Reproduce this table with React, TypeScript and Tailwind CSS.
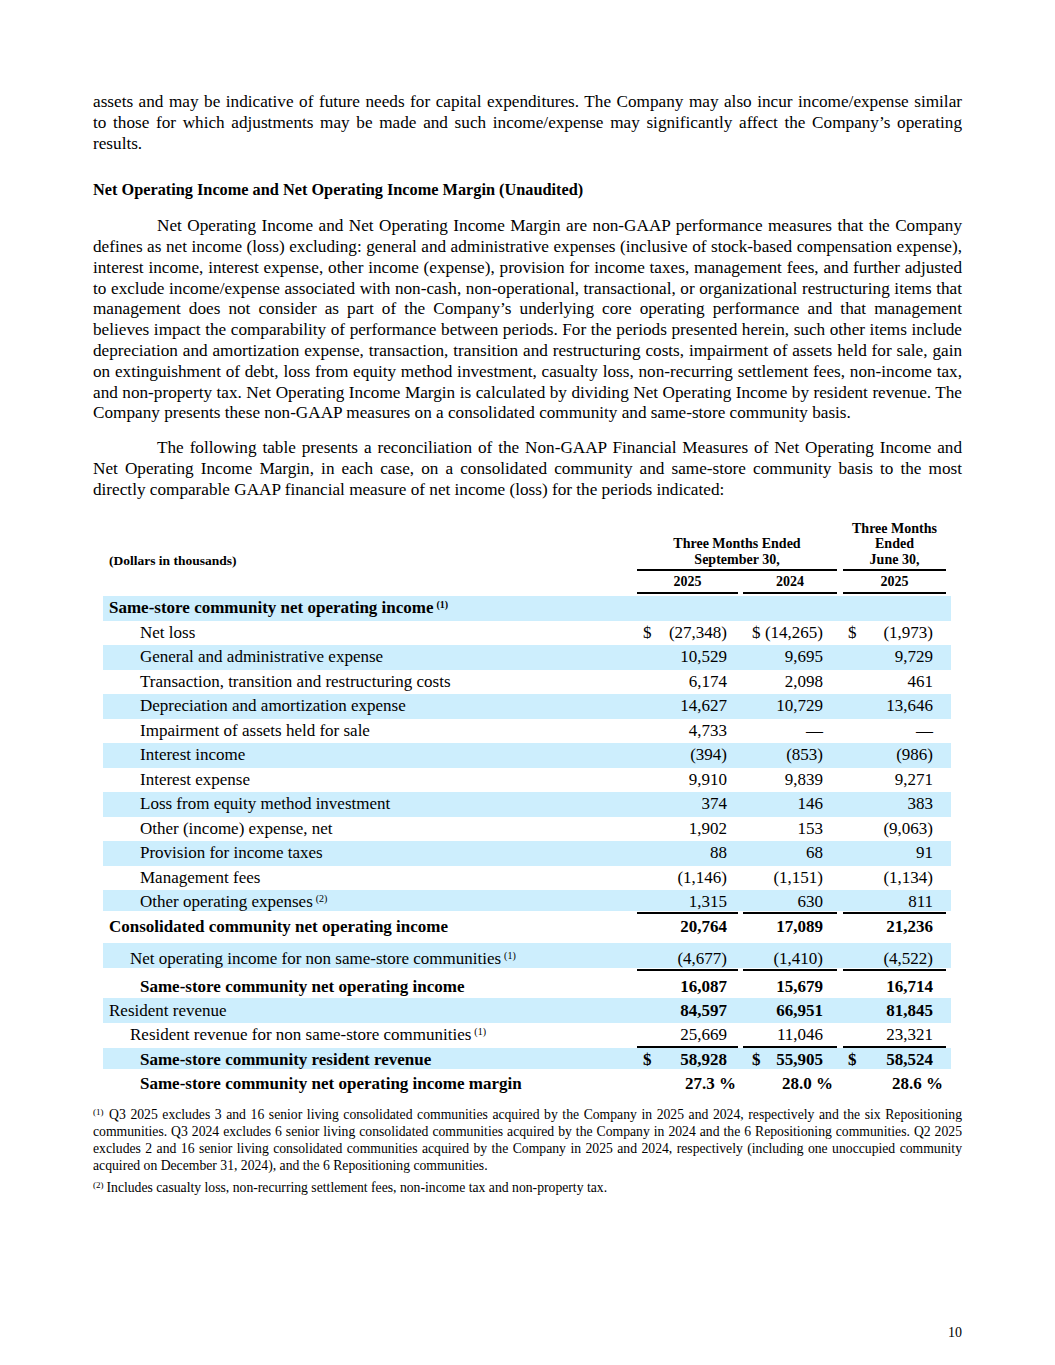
import type { ReactNode } from "react";
import clsx from "clsx";

// Non-GAAP reconciliation page (page 10)

type Cell = { v: string; dollar?: boolean };

interface RowDef {
  label: string;
  note?: string;
  indent: "none" | "sub" | "item";
  bold?: boolean;
  boldValues?: boolean;
  pct?: boolean;
  blue?: boolean;
  h: string;
  pad?: string;
  values?: Cell[];
}

const GRID = "grid grid-cols-[534px_101px_5px_94px_6px_103px_5px]";
const PL = ["pl-[6px]", "pl-[9px]", "pl-[5px]"];
const PR = ["pr-[11px]", "pr-[14px]", "pr-[13px]"];
const PR_PCT = ["pr-[2px]", "pr-[4px]", "pr-[3px]"];
const INDENT = { none: "pl-[6px]", sub: "pl-[27px]", item: "pl-[37px]" };

const n = (a: string, b: string, c: string, dollar = false): Cell[] => [
  { v: a, dollar },
  { v: b, dollar },
  { v: c, dollar },
];

// Lines follow the original page's breaks; every line but the last is justified.
function Lines({ lines, indent, className }: { lines: ReactNode[]; indent?: boolean; className?: string }) {
  return (
    <div className={className}>
      {lines.map((l, i) => (
        <span
          key={i}
          className={clsx(
            "block whitespace-nowrap",
            i < lines.length - 1 && "text-justify [text-align-last:justify]",
            i === 0 && indent && "pl-[64px]",
          )}
        >
          {l}
        </span>
      ))}
    </div>
  );
}

function Sup({ children }: { children: string }) {
  return <sup className="ml-[3px] text-[10px] leading-none top-[-0.55em]">{children}</sup>;
}

function NoteMark({ children }: { children: string }) {
  return <sup className="text-[9px] leading-none top-[-0.5em] mr-[1px]">{children}</sup>;
}

function ValueCell({ cell, i, bold, pct }: { cell?: Cell; i: number; bold?: boolean; pct?: boolean }) {
  if (!cell) return <div />;
  return (
    <div
      className={clsx(
        "flex justify-between whitespace-nowrap",
        PL[i],
        pct ? PR_PCT[i] : PR[i],
        bold && "font-bold",
      )}
    >
      <span>{cell.dollar ? "$" : ""}</span>
      <span>{cell.v}</span>
    </div>
  );
}

function Row({ row }: { row: RowDef }) {
  const vals = row.values ?? [];
  return (
    <div className={clsx(GRID, "items-center", row.h, row.pad, row.blue && "bg-[#cdeefd]")}>
      <div className={clsx(INDENT[row.indent], "whitespace-nowrap", row.bold && "font-bold")}>
        {row.label}
        {row.note && <Sup>{row.note}</Sup>}
      </div>
      <ValueCell cell={vals[0]} i={0} bold={row.boldValues} pct={row.pct} />
      <div />
      <ValueCell cell={vals[1]} i={1} bold={row.boldValues} pct={row.pct} />
      <div />
      <ValueCell cell={vals[2]} i={2} bold={row.boldValues} pct={row.pct} />
      <div />
    </div>
  );
}

function Rule({ h }: { h: string }) {
  return (
    <div className={clsx(GRID, h)}>
      <div />
      <div className="border-b-2 border-black" />
      <div />
      <div className="border-b-2 border-black" />
      <div />
      <div className="border-b-2 border-black" />
      <div />
    </div>
  );
}

const TOP_ROWS: RowDef[] = [
  { label: "Same-store community net operating income", note: "(1)", indent: "none", bold: true, blue: true, h: "h-[24.5px]" },
  { label: "Net loss", indent: "item", h: "h-[24.5px]", values: n("(27,348)", "(14,265)", "(1,973)", true) },
  { label: "General and administrative expense", indent: "item", blue: true, h: "h-[24.5px]", values: n("10,529", "9,695", "9,729") },
  { label: "Transaction, transition and restructuring costs", indent: "item", h: "h-[24.5px]", values: n("6,174", "2,098", "461") },
  { label: "Depreciation and amortization expense", indent: "item", blue: true, h: "h-[24.5px]", values: n("14,627", "10,729", "13,646") },
  { label: "Impairment of assets held for sale", indent: "item", h: "h-[24.5px]", values: n("4,733", "—", "—") },
  { label: "Interest income", indent: "item", blue: true, h: "h-[24.5px]", values: n("(394)", "(853)", "(986)") },
  { label: "Interest expense", indent: "item", h: "h-[24.5px]", values: n("9,910", "9,839", "9,271") },
  { label: "Loss from equity method investment", indent: "item", blue: true, h: "h-[24.5px]", values: n("374", "146", "383") },
  { label: "Other (income) expense, net", indent: "item", h: "h-[24.5px]", values: n("1,902", "153", "(9,063)") },
  { label: "Provision for income taxes", indent: "item", blue: true, h: "h-[24.5px]", values: n("88", "68", "91") },
  { label: "Management fees", indent: "item", h: "h-[24.5px]", values: n("(1,146)", "(1,151)", "(1,134)") },
  { label: "Other operating expenses", note: "(2)", indent: "item", blue: true, h: "h-[21px]", pad: "pt-[2px]", values: n("1,315", "630", "811") },
];

export default function App() {
  return (
    <div className="min-h-[1365px] w-[1055px] bg-white text-black font-['Liberation_Serif','Times_New_Roman',serif] flex flex-col px-[93px] pt-[92px] pb-[24px]">
      <Lines
        className="text-[17.2px] leading-[20.8px]"
        lines={[
          "assets and may be indicative of future needs for capital expenditures. The Company may also incur income/expense similar",
          "to those for which adjustments may be made and such income/expense may significantly affect the Company’s operating",
          "results.",
        ]}
      />

      <h2 className="mt-[26px] text-[16.3px] leading-[20.8px] font-bold">
        Net Operating Income and Net Operating Income Margin (Unaudited)
      </h2>

      <Lines
        indent
        className="mt-[15px] text-[17.2px] leading-[20.8px]"
        lines={[
          "Net Operating Income and Net Operating Income Margin are non-GAAP performance measures that the Company",
          "defines as net income (loss) excluding: general and administrative expenses (inclusive of stock-based compensation expense),",
          "interest income, interest expense, other income (expense), provision for income taxes, management fees, and further adjusted",
          "to exclude income/expense associated with non-cash, non-operational, transactional, or organizational restructuring items that",
          "management does not consider as part of the Company’s underlying core operating performance and that management",
          "believes impact the comparability of performance between periods. For the periods presented herein, such other items include",
          "depreciation and amortization expense, transaction, transition and restructuring costs, impairment of assets held for sale, gain",
          "on extinguishment of debt, loss from equity method investment, casualty loss, non-recurring settlement fees, non-income tax,",
          "and non-property tax. Net Operating Income Margin is calculated by dividing Net Operating Income by resident revenue. The",
          "Company presents these non-GAAP measures on a consolidated community and same-store community basis.",
        ]}
      />

      <Lines
        indent
        className="mt-[14px] text-[17.2px] leading-[20.8px]"
        lines={[
          "The following table presents a reconciliation of the Non-GAAP Financial Measures of Net Operating Income and",
          "Net Operating Income Margin, in each case, on a consolidated community and same-store community basis to the most",
          "directly comparable GAAP financial measure of net income (loss) for the periods indicated:",
        ]}
      />

      {/* Reconciliation table */}
      <div className="mt-[20px] ml-[10px] w-[848px] text-[17px] leading-[20px]">
        <div className={clsx(GRID, "items-end text-[14px] leading-[15.5px] font-bold")}>
          <div className="pl-[6px] pb-[3px] text-[13.5px]">(Dollars in thousands)</div>
          <div className="col-span-3 text-center border-b-2 border-black pb-[2px]">
            Three Months Ended
            <br />
            September 30,
          </div>
          <div />
          <div className="text-center border-b-2 border-black pb-[2px]">
            Three Months
            <br />
            Ended
            <br />
            June 30,
          </div>
          <div />
        </div>
        <div className={clsx(GRID, "h-[23px] text-[14px] font-bold")}>
          <div />
          <div className="flex items-center justify-center border-b-2 border-black">2025</div>
          <div />
          <div className="flex items-center justify-center border-b-2 border-black">2024</div>
          <div />
          <div className="flex items-center justify-center border-b-2 border-black">2025</div>
          <div />
        </div>
        <div className="h-[2px]" />

        {TOP_ROWS.map((r) => (
          <Row key={r.label} row={r} />
        ))}
        <Rule h="h-[3px]" />
        <Row
          row={{
            label: "Consolidated community net operating income",
            indent: "none",
            bold: true,
            boldValues: true,
            h: "h-[24px]",
            pad: "pt-[1px]",
            values: n("20,764", "17,089", "21,236"),
          }}
        />
        <div className="h-[5px]" />
        <Row
          row={{
            label: "Net operating income for non same-store communities",
            note: "(1)",
            indent: "sub",
            blue: true,
            h: "h-[25px]",
            pad: "pt-[6px]",
            values: n("(4,677)", "(1,410)", "(4,522)"),
          }}
        />
        <Rule h="h-[3px]" />
        <Row
          row={{
            label: "Same-store community net operating income",
            indent: "item",
            bold: true,
            boldValues: true,
            h: "h-[27px]",
            pad: "pt-[5px]",
            values: n("16,087", "15,679", "16,714"),
          }}
        />
        <Row
          row={{
            label: "Resident revenue",
            indent: "none",
            boldValues: true,
            blue: true,
            h: "h-[24.5px]",
            pad: "pt-[2px]",
            values: n("84,597", "66,951", "81,845"),
          }}
        />
        <Row
          row={{
            label: "Resident revenue for non same-store communities",
            note: "(1)",
            indent: "sub",
            h: "h-[23.5px]",
            pad: "pt-[2px]",
            values: n("25,669", "11,046", "23,321"),
          }}
        />
        <Rule h="h-[2px]" />
        <Row
          row={{
            label: "Same-store community resident revenue",
            indent: "item",
            bold: true,
            boldValues: true,
            blue: true,
            h: "h-[21px]",
            pad: "pt-[2px]",
            values: n("58,928", "55,905", "58,524", true),
          }}
        />
        <Row
          row={{
            label: "Same-store community net operating income margin",
            indent: "item",
            bold: true,
            boldValues: true,
            pct: true,
            h: "h-[26px]",
            pad: "pt-[3px]",
            values: n("27.3 %", "28.0 %", "28.6 %"),
          }}
        />
      </div>

      {/* Footnotes */}
      <div className="mt-[11px] text-[13.7px] leading-[17px]">
        <Lines
          lines={[
            <>
              <NoteMark>(1)</NoteMark> Q3 2025 excludes 3 and 16 senior living consolidated communities acquired by the
              Company in 2025 and 2024, respectively and the six Repositioning
            </>,
            "communities. Q3 2024 excludes 6 senior living consolidated communities acquired by the Company in 2024 and the 6 Repositioning communities. Q2 2025",
            "excludes 2 and 16 senior living consolidated communities acquired by the Company in 2025 and 2024, respectively (including one unoccupied community",
            "acquired on December 31, 2024), and the 6 Repositioning communities.",
          ]}
        />
        <p className="mt-[5px] whitespace-nowrap">
          <sup className="text-[9px] leading-none top-[-0.5em] mr-[3px]">(2)</sup>Includes casualty loss, non-recurring
          settlement fees, non-income tax and non-property tax.
        </p>
      </div>

      <div className="mt-auto text-right text-[14px] leading-[16px]">10</div>
    </div>
  );
}
